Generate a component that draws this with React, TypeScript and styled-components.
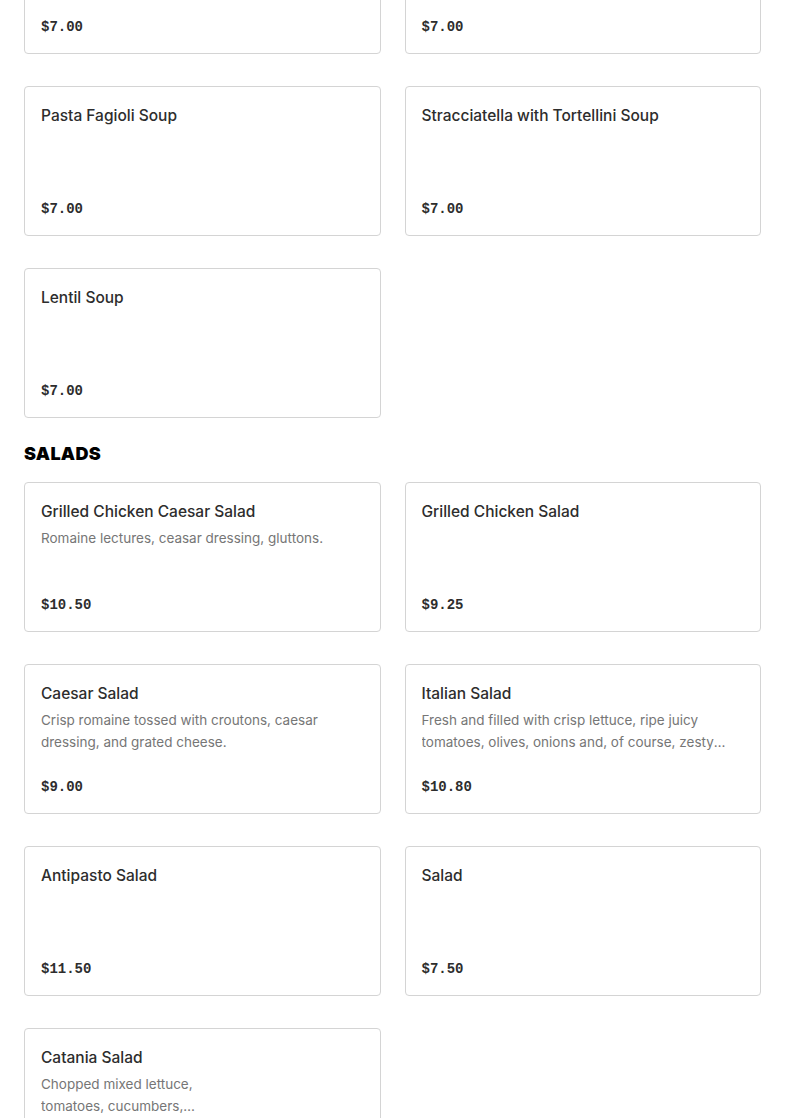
import React from 'react';
import styled, {createGlobalStyle} from 'styled-components';

type Item = {
    name: string,
    description?: string,
    price: string,
    hasImage?: boolean,
};

type Section = {
    title?: string,
    items: Item[],
};

const GlobalStyle = createGlobalStyle`
    html, body {
        margin: 0;
        padding: 0;
        background: #fff;
        overflow: hidden;
    }
    body {
        font-family: Inter, "Liberation Sans", sans-serif;
        color: #2d2d2d;
    }
`;

const Page = styled.div`
    padding: 0 24px;
    margin-top: -96px;
`;

const SectionBlock = styled.section`
    display: flex;
    flex-flow: column nowrap;
    margin-bottom: 32px;
`;

const SectionTitle = styled.h2`
    margin: -8px 0 16px;
    font-family: Inter, "Liberation Sans", sans-serif;
    font-size: 18px;
    font-weight: 900;
    line-height: 24px;
    letter-spacing: 0.3px;
    text-transform: uppercase;
    color: #000;
`;

const Grid = styled.div`
    display: grid;
    grid-template-columns: 1fr 1fr;
    column-gap: 24px;
    row-gap: 32px;
`;

const Card = styled.div`
    box-sizing: border-box;
    height: 150px;
    display: flex;
    flex-flow: row nowrap;
    border: 1px solid #d4d4d4;
    border-radius: 4px;
    padding: 17px 16px 15px;
    background: #fff;
`;

const Body = styled.div<{narrow?: boolean}>`
    display: flex;
    flex-flow: column nowrap;
    flex: 1;
    min-width: 0;
    max-width: ${({narrow}) => (narrow ? '172px' : 'none')};
`;

const Name = styled.div`
    font-size: 15.5px;
    font-weight: 500;
    line-height: 24px;
    color: #2d2d2d;
    white-space: nowrap;
`;

const Description = styled.div`
    margin-top: 3px;
    font-size: 13.5px;
    line-height: 22px;
    color: #767676;
    display: -webkit-box;
    -webkit-line-clamp: 2;
    -webkit-box-orient: vertical;
    overflow: hidden;
`;

const Price = styled.div`
    margin-top: auto;
    font-family: "Liberation Mono", "DejaVu Sans Mono", monospace;
    font-size: 14px;
    font-weight: 700;
    line-height: 22px;
    color: #2d2d2d;
`;

const sections: Section[] = [
    {
        items: [
            {name: 'Minestrone Soup', price: '$7.00'},
            {name: 'Chicken Noodle Soup', price: '$7.00'},
            {name: 'Pasta Fagioli Soup', price: '$7.00'},
            {name: 'Stracciatella with Tortellini Soup', price: '$7.00'},
            {name: 'Lentil Soup', price: '$7.00'},
        ],
    },
    {
        title: 'Salads',
        items: [
            {name: 'Grilled Chicken Caesar Salad', description: 'Romaine lectures, ceasar dressing, gluttons.', price: '$10.50'},
            {name: 'Grilled Chicken Salad', price: '$9.25'},
            {name: 'Caesar Salad', description: 'Crisp romaine tossed with croutons, caesar dressing, and grated cheese.', price: '$9.00'},
            {name: 'Italian Salad', description: 'Fresh and filled with crisp lettuce, ripe juicy tomatoes, olives, onions and, of course, zesty Italian dressing.', price: '$10.80'},
            {name: 'Antipasto Salad', price: '$11.50'},
            {name: 'Salad', price: '$7.50'},
            {name: 'Catania Salad', description: 'Chopped mixed lettuce, tomatoes, cucumbers, pepperoncini and olives.', price: '$10.50', hasImage: true},
        ],
    },
];

function MenuCard({item}: {item: Item}) {
    return (
        <Card>
            <Body narrow={item.hasImage}>
                <Name>{item.name}</Name>
                {item.description && <Description>{item.description}</Description>}
                <Price>{item.price}</Price>
            </Body>
        </Card>
    );
}

export default function App() {
    return (
        <>
            <GlobalStyle/>
            <Page>
                {sections.map((section, i) => (
                    <SectionBlock key={i}>
                        {section.title && <SectionTitle>{section.title}</SectionTitle>}
                        <Grid>
                            {section.items.map(item => <MenuCard key={item.name} item={item}/>)}
                        </Grid>
                    </SectionBlock>
                ))}
            </Page>
        </>
    );
}
